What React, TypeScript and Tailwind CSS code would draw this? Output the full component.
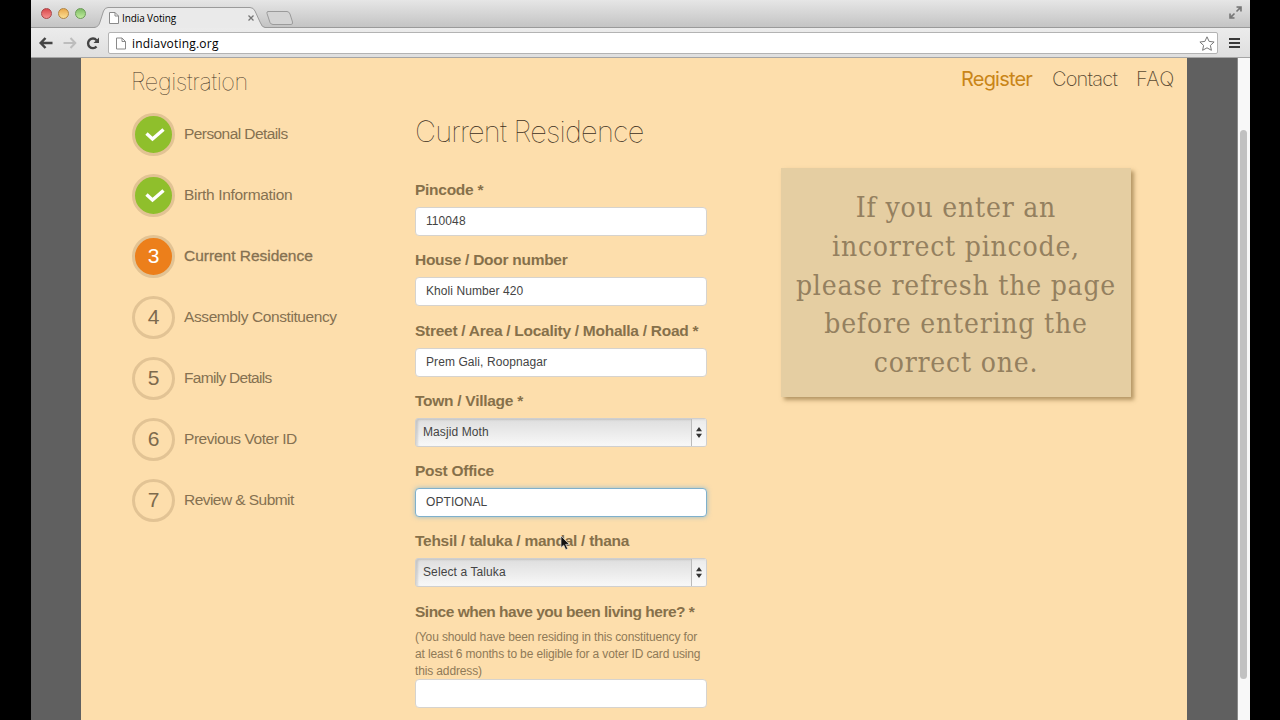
import clsx from 'clsx';

const steps = [
    { label: 'Personal Details', state: 'done', tracking: 'tracking-[-0.58px]' },
    { label: 'Birth Information', state: 'done', tracking: 'tracking-[-0.32px]' },
    { label: 'Current Residence', state: 'current', tracking: 'tracking-[-0.03px]' },
    { label: 'Assembly Constituency', state: 'todo', tracking: 'tracking-[-0.4px]' },
    { label: 'Family Details', state: 'todo', tracking: 'tracking-[-0.7px]' },
    { label: 'Previous Voter ID', state: 'todo', tracking: 'tracking-[-0.46px]' },
    { label: 'Review & Submit', state: 'todo', tracking: 'tracking-[-0.55px]' },
];

const fields = [
    { label: 'Pincode *', value: '110048', type: 'text' },
    { label: 'House / Door number', value: 'Kholi Number 420', type: 'text' },
    { label: 'Street / Area / Locality / Mohalla / Road *', value: 'Prem Gali, Roopnagar', type: 'text' },
    { label: 'Town / Village *', value: 'Masjid Moth', type: 'select' },
    { label: 'Post Office', value: 'OPTIONAL', type: 'text', focused: true },
    { label: 'Tehsil / taluka / mandal / thana', value: 'Select a Taluka', type: 'select' },
];

function PageIcon({ className }: { className?: string }) {
    return (
        <svg className={className} viewBox="0 0 10 12" fill="#fff" stroke="#8a8a8a">
            <path d="M.5.5h5.5l3.5 3.5v7.500h-9z" />
            <path d="M6 .5v3.500h3.500" fill="none" />
        </svg>
    );
}

function TitleBar() {
    return (
        <div className="relative flex h-[28px] shrink-0 border-b border-[#9a9a9a] bg-linear-to-b from-[#e6e6e6] to-[#c4c4c4]">
            <div className="flex gap-[6px] pt-[8px] pl-[10px]">
                <span className="size-[11px] rounded-full border border-[#a9484a] bg-linear-to-b from-[#d9474c] to-[#f58f8d]" />
                <span className="size-[11px] rounded-full border border-[#b08544] bg-linear-to-b from-[#e9a94b] to-[#fbdf92]" />
                <span className="size-[11px] rounded-full border border-[#6c9a58] bg-linear-to-b from-[#7fbc66] to-[#c0ec9d]" />
            </div>
            <svg className="absolute top-[7px] left-[62px]" width="205" height="21" viewBox="0 0 205 21">
                <path d="M1 21 C5 20 6 18 7 15 L10.500 4 Q12 .5 15 .5 H157 Q160.500 .5 162 4 L167 15 Q169 20.500 172 20.500 V21Z" fill="#eaeaea" />
                <path d="M1 20.500 C5 20 6 18 7 15 L10.500 4 Q12 .5 15 .5 H157 Q160.500 .5 162 4 L167 15 Q169 20.500 172 20.500" fill="none" stroke="#9b9b9b" />
                <path d="M175 4.500 H194 Q196 4.500 197 7 L199.500 15 Q200 17.500 198 17.500 H180 Q178 17.500 177 15.500 L174 6.500 Q173.500 4.500 175 4.500Z" fill="#d4d4d4" stroke="#9b9b9b" />
            </svg>
            <div className="relative ml-[23px] flex h-full items-center pt-[9px]">
                <PageIcon className="h-[12px] w-[10px]" />
                <span className="ml-[3px] w-[126px] font-['Open_Sans',sans-serif] text-[10px] font-medium tracking-[-0.1px] whitespace-nowrap text-black">India Voting</span>
                <svg width="6" height="6" viewBox="0 0 6 6" stroke="#777" strokeWidth="1.3">
                    <path d="M.5.5l5 5M5.500.5l-5 5" />
                </svg>
            </div>
            <svg className="absolute top-[6px] right-[8px]" width="13" height="13" viewBox="0 0 13 13" fill="#777" stroke="#777" strokeWidth="1.6">
                <path d="M7.500 1h4.500v4.500M12 1L7.500 5.500M5.500 12H1V7.500M1 12l4.500-4.500" fillOpacity="0.4" />
            </svg>
        </div>
    );
}

function Toolbar() {
    return (
        <div className="flex h-[30px] shrink-0 items-center border-b border-[#a5a5a5] bg-linear-to-b from-[#ececec] to-[#dfdfdf] pt-px">
            <svg className="ml-[8px]" width="14" height="12" viewBox="0 0 14 12" fill="none" stroke="#444" strokeWidth="2.500">
                <path d="M6.500 1L1.700 6l4.800 5M2 6h11.500" />
            </svg>
            <svg className="ml-[10px]" width="14" height="12" viewBox="0 0 14 12" fill="none" stroke="#bdbdbd" strokeWidth="2">
                <path d="M7.500 1l4.800 5-4.800 5M12 6H.5" />
            </svg>
            <svg className="ml-[9px]" width="14" height="13" viewBox="0 0 14 13" fill="none" stroke="#444" strokeWidth="2.400">
                <path d="M10.500 9.500A4.800 4.800 0 1 1 10.500 3.200" />
                <path d="M13 .5v5.500H7.500z" fill="#444" stroke="none" />
            </svg>
            <div className="ml-[8px] flex h-[22px] w-[1110px] items-center rounded-[2px] border border-[#b3b3b3] bg-white">
                <PageIcon className="ml-[7px] h-[13px] w-[10px]" />
                <span className="ml-[6px] grow pt-px font-['Open_Sans',sans-serif] text-[12px] font-medium tracking-[0.2px] text-black">indiavoting.org</span>
                <svg className="mr-[2px]" width="16" height="15" viewBox="0 0 16 15" fill="#fff" stroke="#777" strokeLinejoin="round">
                    <path d="M8 .8l2.100 4.600 5 .6-3.700 3.400 1 4.900L8 11.800l-4.400 2.500 1-4.900L.9 6l5-.6z" />
                </svg>
            </div>
            <div className="ml-[11px] flex w-[11px] flex-col gap-[2px]">
                <span className="h-[2px] bg-[#3a3a3a]" />
                <span className="h-[2px] bg-[#3a3a3a]" />
                <span className="h-[2px] bg-[#3a3a3a]" />
            </div>
        </div>
    );
}

function Steps() {
    return (
        <ul className="mt-[16px] flex flex-col gap-[18px]">
            {steps.map((step, i) => (
                <li key={step.label} className="flex h-[43px] items-center">
                    <span
                        className={clsx(
                            'flex size-[43px] items-center justify-center rounded-full border-[3px] border-[#e2c394] text-[21px]',
                            step.state === 'done' && 'bg-[#8fbf2c]',
                            step.state === 'current' && 'bg-[#ec7f1b] pb-px text-white',
                            step.state === 'todo' && 'pb-px text-[#7d6a4c]'
                        )}
                    >
                        {step.state === 'done' ? (
                            <svg width="20" height="14" viewBox="0 0 20 14" fill="none" stroke="#fff" strokeWidth="3.400" className="ml-[3px]">
                                <path d="M1.500 5.500l6 5.500L18.500 1.500" />
                            </svg>
                        ) : (
                            i + 1
                        )}
                    </span>
                    <span
                        className={clsx(
                            'ml-[9px] pb-[2px] text-[15.5px] whitespace-nowrap text-[#857151]',
                            step.tracking,
                            step.state === 'current' && '[-webkit-text-stroke:0.3px_#857151]'
                        )}
                    >
                        {step.label}
                    </span>
                </li>
            ))}
        </ul>
    );
}

function Select({ value }: { value: string }) {
    return (
        <div className="flex h-[29px] w-[292px] rounded-[3px] border border-[#cfcfcf] bg-linear-to-b from-[#dedede] to-[#f8f8f8] text-[12px] text-[#444] shadow-[inset_2px_1px_2px_rgba(0,0,0,0.12)]">
            <span className="grow pl-[7px] leading-[27px] tracking-[0.1px]">{value}</span>
            <span className="flex w-[15px] items-center justify-center border-l border-[#bbb] bg-white/40">
                <svg width="6" height="11" viewBox="0 0 6 11" fill="#333">
                    <path d="M3 0l3 4.300H0zM3 11L0 6.700h6z" />
                </svg>
            </span>
        </div>
    );
}

function Form() {
    return (
        <div className="ml-[78px] w-[300px] shrink-0">
            <h1 className="mt-[55px] h-[38px] font-[Inter,sans-serif] text-[29px] leading-[38px] font-thin tracking-[-0.800px] whitespace-nowrap text-[#3c2f1c]">Current Residence</h1>
            <div className="mt-[28px]">
                {fields.map((field) => (
                    <div key={field.label} className="h-[70.3px]">
                        <label className="block h-[28px] text-[15.5px] leading-[22px] font-bold tracking-[-0.270px] whitespace-nowrap text-[#86704a]">{field.label}</label>
                        {field.type === 'select' ? (
                            <Select value={field.value} />
                        ) : (
                            <div
                                className={clsx(
                                    'h-[29px] w-[292px] rounded-[4px] border bg-white pl-[10px] text-[12px] leading-[27px] tracking-[0.08px] text-[#444]',
                                    field.focused ? 'border-[#7fb0cc] shadow-[0_0_5px_rgba(82,168,236,0.6)]' : 'border-[#d6d3ce]'
                                )}
                            >
                                {field.value}
                            </div>
                        )}
                    </div>
                ))}
                <label className="block h-[27px] text-[15.5px] leading-[22px] font-bold tracking-[-0.5px] whitespace-nowrap text-[#86704a]">Since when have you been living here? *</label>
                <p className="relative top-px text-[12px] leading-[17px] tracking-[-0.14px] whitespace-nowrap text-[#8f7a57]">
                    (You should have been residing in this constituency for
                    <br />
                    at least 6 months to be eligible for a voter ID card using
                    <br />
                    this address)
                </p>
                <div className="h-[29px] w-[292px] rounded-[4px] border border-[#d6d3ce] bg-white" />
            </div>
        </div>
    );
}

function Note() {
    return (
        <div className="mt-[50px] ml-[-24px] flex h-[229px] w-[350px] items-center justify-center bg-[#e5cea2] pt-[7px] text-center font-['DejaVu_Serif_Condensed','DejaVu_Serif',serif] text-[28px] leading-[38.800px] font-stretch-condensed tracking-[0.8px] whitespace-nowrap text-[#94805f] shadow-[3px_3px_4px_rgba(110,80,30,0.5)]">
            If you enter an
            <br />
            incorrect pincode,
            <br />
            please refresh the page
            <br />
            before entering the
            <br />
            correct one.
        </div>
    );
}

export default function App() {
    return (
        <div className="flex h-[720px] w-[1280px] justify-center overflow-hidden bg-black pl-px font-['Liberation_Sans',sans-serif]">
            <div className="relative flex w-[1219px] flex-col">
                <TitleBar />
                <Toolbar />
                <div className="flex min-h-0 grow bg-[#606060]">
                    <main className="ml-[50px] flex w-[1106px] overflow-hidden bg-[#fddeac] pl-[51px]">
                        <div className="w-[205px] shrink-0">
                            <h2 className="mt-[8px] ml-[-1px] h-[31px] font-[Inter,sans-serif] text-[23.5px] leading-[31px] font-thin tracking-[-0.400px] text-[#3c2f1c]">Registration</h2>
                            <Steps />
                        </div>
                        <Form />
                        <div className="ml-[90px]">
                            <nav className="ml-[156px] flex h-[60px] font-[Inter,sans-serif] text-[20px] leading-[42px] font-extralight tracking-[-0.800px] text-[#5a4a32]">
                                <span className="w-[91px] font-normal text-[#c98518]">Register</span>
                                <span className="w-[84px]">Contact</span>
                                <span className="tracking-[0.4px]">FAQ</span>
                            </nav>
                            <Note />
                        </div>
                    </main>
                    <div className="ml-[50px] grow border-l border-[#8a8a8a] bg-[#f8f8f8] pt-[72px]">
                        <div className="ml-[2px] h-[549px] w-[7px] rounded-full bg-[#c1c1c1]" />
                    </div>
                </div>
                <svg className="absolute top-[535px] left-[529px]" width="11" height="16" viewBox="0 0 11 16">
                    <path d="M1 1v11.500l2.700-2.400 2 4.500 2-.9-2-4.300h3.600z" fill="#111" stroke="#ddd" strokeWidth="0.700" />
                </svg>
            </div>
        </div>
    );
}
